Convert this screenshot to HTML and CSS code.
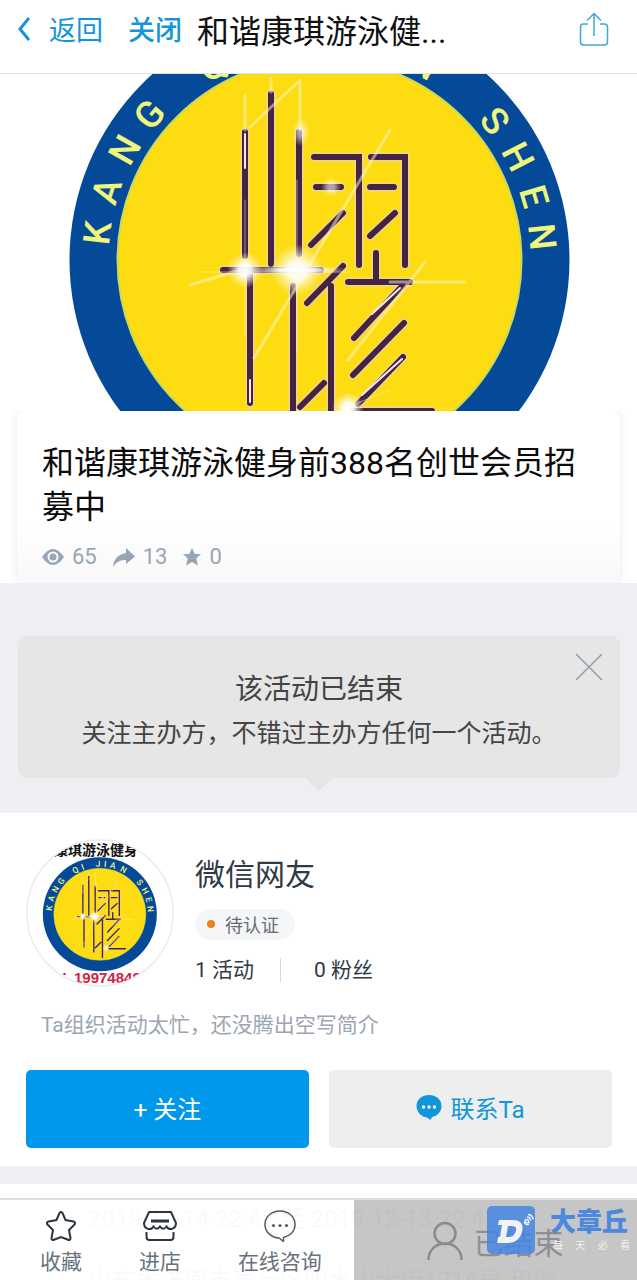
FILE: index.html
```
<!DOCTYPE html>
<html lang="zh-CN">
<head>
<meta charset="utf-8">
<meta name="viewport" content="width=device-width, initial-scale=1">
<title>和谐康琪游泳健身</title>
<link rel="stylesheet" href="styles.css">
</head>
<body>
<svg class="defs" aria-hidden="true">
  <defs>
    <radialGradient id="glow">
      <stop offset="0" stop-color="#fff"/>
      <stop offset=".35" stop-color="#fff" stop-opacity=".9"/>
      <stop offset="1" stop-color="#fff6c0" stop-opacity="0"/>
    </radialGradient>
    <g id="emblem">
      <circle cx="319.500" cy="260" r="250" fill="#054a98"/>
      <circle cx="319.500" cy="260" r="202" fill="#fddc12" stroke="#c8d860" stroke-width="2"/>
      <g class="emblem-letters" text-anchor="middle">
        <g transform="translate(319.500 260)">
          <text transform="rotate(-83)" y="-211">K</text>
          <text transform="rotate(-72)" y="-211">A</text>
          <text transform="rotate(-60.500)" y="-211">N</text>
          <text transform="rotate(-49.500)" y="-211">G</text>
          <text transform="rotate(-29)" y="-209">Q</text>
          <text transform="rotate(-20)" y="-209">I</text>
          <text transform="rotate(-2)" y="-209">J</text>
          <text transform="rotate(6)" y="-209">I</text>
          <text transform="rotate(15)" y="-209">A</text>
          <text transform="rotate(28)" y="-209">N</text>
          <text transform="rotate(51.500)" y="-211">S</text>
          <text transform="rotate(62.500)" y="-211">H</text>
          <text transform="rotate(73.500)" y="-211">E</text>
          <text transform="rotate(84)" y="-211">N</text>
        </g>
      </g>
      <g fill="none" stroke-linecap="round">
        <path stroke="#f0d58c" stroke-width="9" d="M245 132V256M271 94V264M299 132V254M223 270H321M250 276V403M293 286V425M307 303L343 266M314 157H359V265M371 157H405V265M316 187H341M370 187H394M311 245L343 213M370 236L395 213M376 253V280M348 282H410M331 286V450M404 284L354 338M404 323L353 375M403 357L358 404M353 411H432M300 407L324 383"/>
        <path stroke="#452343" stroke-width="6" d="M245 132V256M271 94V264M299 132V254M223 270H321M250 276V403M293 286V425M307 303L343 266M314 157H359V265M371 157H405V265M316 187H341M370 187H394M311 245L343 213M370 236L395 213M376 253V280M348 282H410M331 286V450M404 284L354 338M404 323L353 375M403 357L358 404M353 411H432M300 407L324 383"/>
        <path stroke="#f8e9de" stroke-width="2" d="M245 134V168M362 395L402 359M250 380V402M372 314L400 288"/>
      </g>
      <g stroke="#fff8d0" stroke-linecap="round" opacity=".5">
        <path stroke-width="3" d="M254 358L390 130M250 127L298 82M300 80V130M271 78V92M245 95V130M348 360L425 262M390 282H465M190 285L240 270"/>
        <path stroke-width="1" d="M200 272H350M297 180V350M245 200V335M315 420L390 390"/>
      </g>
      <circle cx="245" cy="270" r="18" fill="url(#glow)"/>
      <circle cx="297" cy="270" r="26" fill="url(#glow)"/>
      <circle cx="348" cy="408" r="16" fill="url(#glow)"/>
      <ellipse cx="297" cy="270" rx="50" ry="5" fill="url(#glow)"/>
      <circle cx="331" cy="187" r="10" fill="url(#glow)" opacity=".6"/>
      <ellipse cx="301" cy="132" rx="9" ry="14" fill="url(#glow)" opacity=".6"/>
    </g>
  </defs>
</svg>

<header class="topbar">
  <a class="back" href="#">
    <svg class="chevron" viewBox="0 0 16 28" aria-hidden="true"><path d="M13 3L4 14l9 11"/></svg>
    <span>返回</span>
  </a>
  <a class="close-link" href="#">关闭</a>
  <h1 class="topbar-title">和谐康琪游泳健...</h1>
  <button class="share" type="button" aria-label="分享">
    <svg viewBox="0 0 30 34" aria-hidden="true"><path d="M9 12H4.500Q1.500 12 1.500 15V30Q1.500 33 4.500 33H25.500Q28.500 33 28.500 30V15Q28.500 12 25.500 12H21M15 24V2M8 8.500L15 1.500L22 8.500"/></svg>
  </button>
</header>

<main class="page">
  <svg class="hero" viewBox="0 74 637 337" role="img" aria-label="KANG QI JIAN SHEN"><use href="#emblem"/></svg>

  <section class="event">
    <div class="event-card">
      <h2 class="event-title">和谐康琪游泳健身前388名创世会员招募中</h2>
      <ul class="counts">
        <li>
          <svg width="22" height="22" viewBox="0 0 22 22" aria-hidden="true"><path fill="#98a5b3" d="M0 11Q11-5 22 11Q11 27 0 11Z"/><circle cx="11" cy="11" r="4.500" fill="none" stroke="#fafafa" stroke-width="2"/></svg>
          <span>65</span>
        </li>
        <li>
          <svg width="22" height="22" viewBox="0 0 22 22" aria-hidden="true"><path fill="#98a5b3" d="M13 2L22 10.500L13 18V14Q5 13 0 21Q1 9 13 7Z"/></svg>
          <span>13</span>
        </li>
        <li>
          <svg width="18" height="22" viewBox="0 0 18 22" aria-hidden="true"><path fill="#98a5b3" d="M9 2L11.700 8H18L13.200 12.500L15 19.500L9 16L3 19.500L4.800 12.500L0 8H6.300Z"/></svg>
          <span>0</span>
        </li>
      </ul>
    </div>
  </section>

  <section class="notice-area">
    <div class="notice">
      <p class="notice-title">该活动已结束</p>
      <p class="notice-text">关注主办方，不错过主办方任何一个活动。</p>
      <button class="notice-close" type="button" aria-label="关闭提示">
        <svg viewBox="0 0 28 28" aria-hidden="true"><path d="M1 1L27 27M27 1L1 27"/></svg>
      </button>
    </div>
  </section>

  <section class="host">
    <div class="host-head">
      <svg class="avatar" viewBox="0 0 148 148" role="img" aria-label="微信网友">
        <defs><clipPath id="round"><circle cx="74" cy="74" r="73"/></clipPath></defs>
        <circle cx="74" cy="74" r="73" fill="#fff"/>
        <g clip-path="url(#round)">
          <text class="avatar-name" x="70" y="16" text-anchor="middle">康琪游泳健身</text>
          <text class="avatar-phone" x="48" y="144">199748487</text>
          <text class="avatar-phone" x="36" y="142">:</text>
          <use href="#emblem" transform="translate(1 16) scale(.228)"/>
        </g>
        <circle cx="74" cy="74" r="73" fill="none" stroke="#ececee" stroke-width="1.500"/>
      </svg>
      <div class="host-info">
        <h3 class="host-name">微信网友</h3>
        <span class="badge">待认证</span>
        <div class="stats"><span>1 活动</span><span>0 粉丝</span></div>
      </div>
    </div>
    <p class="bio">Ta组织活动太忙，还没腾出空写简介</p>
    <div class="actions">
      <button class="follow" type="button">+ 关注</button>
      <button class="contact" type="button">
        <svg width="26" height="26" viewBox="0 0 26 26" aria-hidden="true"><path fill="#1296db" d="M13 1C20 1 25.500 5.500 25.500 12C25.500 17.500 21.500 22 16 23L14.500 26L11 23.500C5 22.500.5 18 .5 12C.5 5.500 6 1 13 1Z"/><g fill="#fff"><circle cx="7.500" cy="13" r="1.700"/><circle cx="13" cy="13" r="1.700"/><circle cx="18.500" cy="13" r="1.700"/></g></svg>
        <span>联系Ta</span>
      </button>
    </div>
  </section>

  <section class="details">
    <p>2019-12-14 22:42 至 2019-12-13 22:42</p>
    <p>山东省济南市章丘区明水山大街1716号 和谐</p>
  </section>
</main>

<footer class="dock">
  <nav class="dock-links">
    <a href="#">
      <svg width="30" height="30" viewBox="0 0 30 30" aria-hidden="true"><path stroke="#2c3540" stroke-width="2" d="M13.500 2Q15 0 16.500 2L19.500 9L27.500 10.500Q30 11.500 28.500 13.500L23 19L24.500 27Q24.500 30 21.500 28.500L15 26L8.500 28.500Q5.500 30 5.500 27L7 19L1.500 13.500Q0 11.500 2.500 10.500L10.500 9Z"/></svg>
      <span>收藏</span>
    </a>
    <a href="#">
      <svg width="34" height="30" viewBox="0 0 34 30" aria-hidden="true"><path stroke="#2c3540" stroke-width="2" d="M6 1H28L33 12Q33 17 28.500 18Q25 18.500 23.500 15.500Q20 20 17 15.500Q14 20 10.500 15.500Q9 18.500 5.500 18Q1 17 1 12ZM3.500 21V26Q3.500 29 6.500 29H27.500Q30.500 29 30.500 26V21"/><path stroke="#2c3540" stroke-width="3" d="M8 10H26"/></svg>
      <span>进店</span>
    </a>
    <a href="#">
      <svg width="32" height="32" viewBox="0 0 32 32" aria-hidden="true"><path stroke="#555d66" stroke-width="1.500" d="M16 1C24.500 1 31 6.500 31 14.500C31 21.500 26 26 19.500 27.500V31.500L15 28C7 27.500 1 22 1 14.500C1 6.500 7.500 1 16 1Z"/><g fill="#555d66"><circle cx="9.500" cy="15.500" r="1.600"/><circle cx="16" cy="15.500" r="1.600"/><circle cx="22.500" cy="15.500" r="1.600"/></g></svg>
      <span>在线咨询</span>
    </a>
  </nav>
  <button class="ended" type="button" disabled>
    <svg width="36" height="40" viewBox="0 0 36 40" aria-hidden="true"><path d="M1.500 39C1.500 17 34.500 17 34.500 39"/><circle cx="18" cy="12.500" r="10.500"/></svg>
    <span>已结束</span>
  </button>
  <div class="watermark">
    <svg width="48" height="48" viewBox="0 0 48 48" aria-hidden="true">
      <rect width="48" height="48" rx="5" fill="#4386e3" fill-opacity=".84"/>
      <path fill="#f2f2f2" fill-rule="evenodd" d="M12 14H26C34 14 37 19 35 26C33 33 28 37 21 37H10L11 31H13L15 19H11ZM21 20L19 31H22C26 31 28 28 29 25C30 21 28 20 25 20Z"/>
      <g fill="none" stroke="#e8f0fb" stroke-width="1.500"><path d="M38 16.500H42Q41.500 13 39 13.500Q37 15 38 17.500Q40 19.500 42 18M40 11Q43.500 11 43.500 14.500M41 8.500Q46 9 46 13.500"/></g>
    </svg>
    <div class="watermark-text">
      <strong>大章丘</strong>
      <div class="slogan"><span>每</span><span>天</span><span>必</span><span>看</span></div>
    </div>
  </div>
</footer>
</body>
</html>
```
FILE: styles.css
```
* { box-sizing: border-box; }

body {
  margin: 0;
  height: 100vh;
  display: flex;
  flex-direction: column;
  position: relative;
  overflow: hidden;
  background: #fff;
  color: #2f3a45;
  font-family: Roboto, "Noto Sans CJK SC", sans-serif;
}

h1, h2, h3, p, ul { margin: 0; padding: 0; font-weight: 400; }
a { color: inherit; text-decoration: none; }
button { border: 0; padding: 0; background: none; font: inherit; color: inherit; }
.defs { position: absolute; width: 0; height: 0; }

.topbar {
  flex: none;
  display: flex;
  align-items: center;
  height: 74px;
  padding: 0 28px 16px 16px;
  border-bottom: 1px solid #dfe3e8;
  color: #1296db;
  font-size: 27px;
}
.back { display: flex; align-items: center; gap: 17px; }
.chevron { width: 16px; height: 28px; fill: none; stroke: #1296db; stroke-width: 3; }
.close-link { margin-left: 25px; font-weight: 500; }
.topbar-title { flex: 1; margin-left: 15px; color: #111; font-size: 32px; white-space: nowrap; }
.share { display: flex; }
.share svg { width: 30px; height: 34px; fill: none; stroke: #3fa6d8; stroke-width: 1.500; }

.page { flex: 1; min-height: 0; overflow-y: auto; scrollbar-width: none; }
.hero { display: block; width: 100%; }
.emblem-letters { font: 500 37px Roboto, sans-serif; fill: #f0f57c; }

.event { padding: 0 17px; overflow: hidden; }
.event-card {
  padding: 30px 24px 13px 25px;
  border-radius: 8px 8px 0 0;
  background: linear-gradient(#fff 66%, #f8f8f9);
  box-shadow: 0 0 8px rgba(0, 0, 0, .09);
}
.event-title { color: #0c0c0c; font-size: 32px; line-height: 44px; }
.counts { display: flex; gap: 16px; margin-top: 15px; list-style: none; color: #98a5b3; font-size: 22px; line-height: 26px; }
.counts li { display: flex; align-items: center; gap: 8px; }

.notice-area { padding: 53px 17px 35px 18px; background: #efeef3; }
.notice {
  position: relative;
  padding: 32px 20px 22px;
  border-radius: 9px;
  background: #e6e6e6;
  color: #444;
  text-align: center;
}
.notice::after {
  content: "";
  position: absolute;
  top: 100%;
  left: 50%;
  margin-left: -14px;
  border: 14px solid transparent;
  border-top: 13px solid #e6e6e6;
  border-bottom: 0;
}
.notice-title { font-size: 28px; line-height: 44px; }
.notice-text { font-size: 25px; line-height: 44px; }
.notice-close { position: absolute; top: 17px; right: 17px; display: flex; }
.notice-close svg { width: 28px; height: 28px; stroke: #929dab; stroke-width: 1.500; }

.host { padding: 26px 25px 18px 26px; border-bottom: 18px solid #eeeef3; }
.host-head { display: flex; gap: 21px; height: 148px; }
.avatar { flex: none; width: 148px; height: 148px; }
.avatar-name { font: 700 14px "Noto Sans CJK SC", sans-serif; fill: #111; }
.avatar-phone { font: 700 15px "Liberation Sans", sans-serif; fill: #d0233f; }
.host-name { margin-top: 13px; font-size: 30px; line-height: 46px; }
.badge {
  display: flex;
  width: max-content;
  align-items: center;
  gap: 10px;
  height: 31px;
  margin-top: 11px;
  padding: 0 16px 2px 12px;
  border-radius: 16px;
  background: #f5f6f8;
  color: #666c73;
  font-size: 18px;
}
.badge::before { content: ""; width: 8px; height: 8px; border-radius: 50%; background: #e98425; }
.stats { display: flex; margin-top: 18px; font-size: 21px; line-height: 24px; }
.stats span + span { margin-left: 26px; padding-left: 33px; border-left: 1px solid #d5d8dc; }
.bio { margin: 22px 15px 0; color: #9ca6b1; font-size: 21px; line-height: 32px; }
.actions { display: flex; gap: 20px; margin-top: 29px; }
.actions button {
  flex: 1;
  display: flex;
  align-items: center;
  justify-content: center;
  gap: 8px;
  height: 78px;
  padding-bottom: 4px;
  border-radius: 5px;
  font-size: 24px;
}
.follow { background: #0098ea; color: #fff; }
.contact { background: #eee; color: #1296db; }

.details { padding: 20px 20px 100px 88px; color: #555; font-size: 24px; line-height: 30px; white-space: nowrap; overflow: hidden; }
.details p + p { margin-top: 32px; }

.dock {
  position: absolute;
  left: 0;
  right: 0;
  bottom: 0;
  display: grid;
  grid-template-columns: minmax(0, 5fr) minmax(0, 4fr);
  height: 82px;
  border-top: 2px solid #dcdddf;
}
.dock-links {
  display: flex;
  justify-content: space-between;
  padding: 10px 32px 0 40px;
  background: rgba(255, 255, 255, .97);
  color: #68727d;
  font-size: 21px;
}
.dock-links a { display: flex; flex-direction: column; align-items: center; }
.dock-links svg { height: 32px; fill: none; }
.dock-links span { margin-top: 6px; line-height: 28px; }
.ended {
  display: flex;
  align-items: center;
  justify-content: center;
  gap: 10px;
  padding-top: 2px;
  background: rgba(196, 196, 196, .97);
  color: #8f8f8f;
  font-size: 30px;
}
.ended svg { fill: none; stroke: #8b8b8b; stroke-width: 2.500; }
.watermark { position: absolute; top: 6px; right: 7px; display: flex; gap: 15px; }
.watermark-text { width: 80px; color: #4c89dc; }
.watermark strong { display: block; font: 900 26px/28px "Noto Sans CJK SC", sans-serif; }
.slogan { display: flex; justify-content: space-between; padding: 4px 0 0 3px; color: #f2f2f2; font-size: 10px; line-height: 16px; }
```
